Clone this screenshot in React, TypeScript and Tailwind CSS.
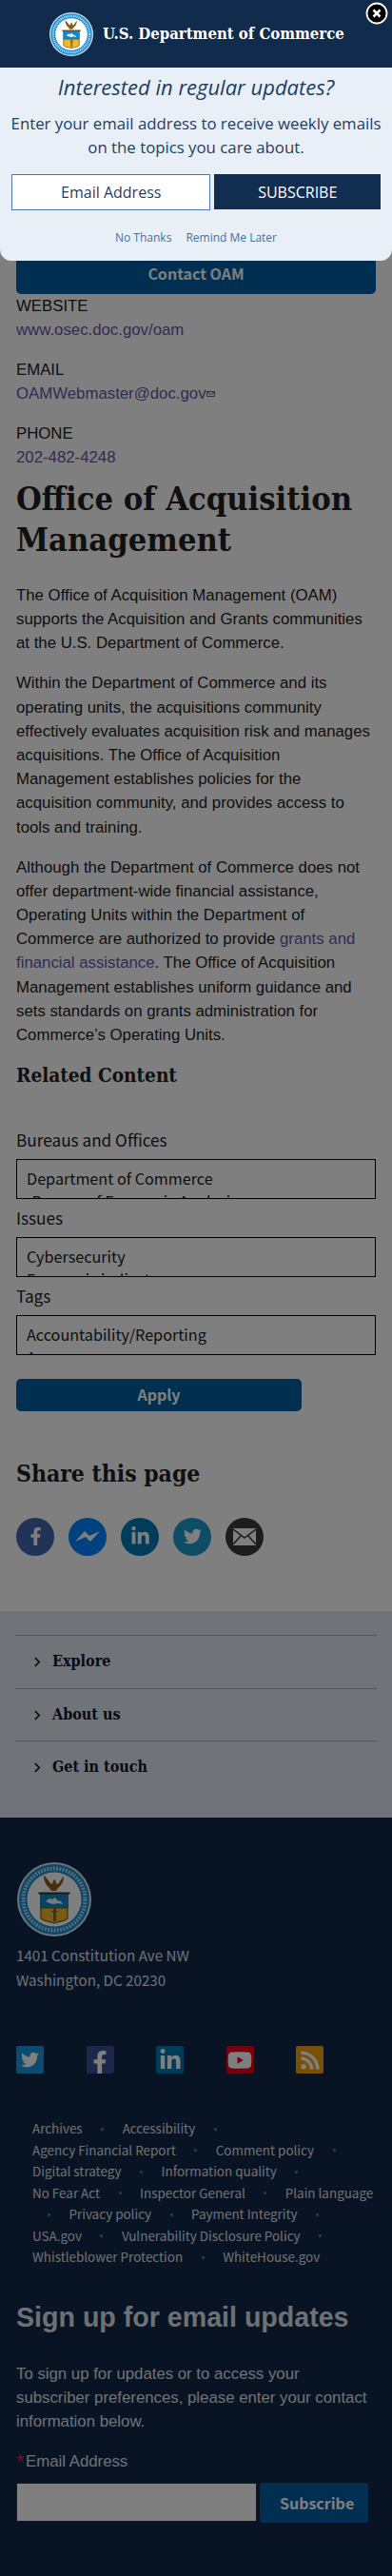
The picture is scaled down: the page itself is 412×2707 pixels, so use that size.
import React from "react";
import { FaFacebookF, FaLinkedinIn, FaTwitter, FaYoutube, FaRss } from "react-icons/fa";

const sans = "font-['Noto_Sans_CJK_SC',sans-serif]";
const serif = "font-['DejaVu_Serif_Condensed','DejaVu_Serif',serif] font-bold [font-stretch:condensed]";

function Seal({ className }: { className: string }) {
  return (
    <svg viewBox="0 0 78 78" className={className}>
      <circle cx="39" cy="39" r="39" fill="#d8e6f2" />
      <circle cx="39" cy="39" r="37" fill="#1b8fd0" />
      <circle cx="39" cy="39" r="32.5" fill="none" stroke="#b9dcf2" strokeWidth="4" strokeDasharray="1.8 1.5" />
      <circle cx="39" cy="39" r="28.5" fill="#fff" />
      <path d="M28 14c2 1 4 4 7 8l2 1 1-4 2-1 1 4 2 1c3-4 4-7 6-8 0 5-2 9-6 12l-2 3h-5l-2-3c-4-3-6-8-6-13z" fill="#8a5a1c" />
      <path d="M24 33h30v15H24z" fill="#1487c4" />
      <path d="M22.500 31.500h33v2h-33z" fill="#333" />
      <path d="M30 41l4-3 3 1 3-2 2 3 4 1 2 3-5-1-5 1-4-1z" fill="#f3f7fa" />
      <path d="M25 48h28v11c-2 3-9 3-14 5-5-2-12-2-14-5z" fill="#f2b829" stroke="#6d5520" strokeWidth="1.2" />
      <path d="M38 48h3v14h-3zM36 51h7v1h-7z" fill="#8a6720" />
    </svg>
  );
}

function Contact({ label, value, mail }: { label: string; value: string; mail?: boolean }) {
  return (
    <div className="mb-[17px] h-[50px] text-[16.800px] leading-[25px]">
      <div>{label}</div>
      <div className="flex items-center text-[#6455a8]">
        <span>{value}</span>
        {mail && (
          <svg viewBox="0 0 10 7" className="h-[6px] w-[9px]" fill="none" stroke="#444">
            <path d="M.5.5h9v6h-9zM.5 1L5 4l4.500-3" />
          </svg>
        )}
      </div>
    </div>
  );
}

function Field({ label, first, second, indent }: { label: string; first: string; second: string; indent?: boolean }) {
  return (
    <div className={`h-[82px] ${sans}`}>
      <div className="h-[29px] text-[17.200px] leading-[17px]">{label}</div>
      <div className="h-[42px] overflow-hidden border border-black pl-[10px] pt-[7px] text-[16.200px] leading-[24px] whitespace-nowrap">
        <div>{first}</div>
        <div className={indent ? "pl-[7px]" : ""}>{second}</div>
      </div>
    </div>
  );
}

const legal = [
  ["Archives", "•", "Accessibility", "•"],
  ["Agency Financial Report", "•", "Comment policy", "•"],
  ["Digital strategy", "•", "Information quality", "•"],
  ["No Fear Act", "•", "Inspector General", "•", "Plain language"],
  ["•", "Privacy policy", "•", "Payment Integrity", "•"],
  ["USA.gov", "•", "Vulnerability Disclosure Policy", "•"],
  ["Whistleblower Protection", "•", "WhiteHouse.gov"],
];

function Share({ bg, children }: { bg: string; children: React.ReactNode }) {
  return <span className={`flex size-10 items-center justify-center rounded-full text-white ${bg}`}>{children}</span>;
}

function Social({ bg, children }: { bg: string; children: React.ReactNode }) {
  return <span className={`flex size-[29px] items-center justify-center overflow-hidden rounded-[2px] text-white ${bg}`}>{children}</span>;
}

function Modal() {
  return (
    <div className="absolute inset-x-0 top-0 h-[274px] overflow-hidden rounded-b-[12px] bg-[#e8eff7] font-['Open_Sans','Noto_Sans',sans-serif] text-[#1d3f60]">
      <div className="flex h-[71px] items-center bg-[#112b4c] pl-[52px]">
        <Seal className="size-[46px]" />
        <span className={`ml-[10px] text-[16.600px] whitespace-nowrap text-white ${serif}`}>U.S. Department of Commerce</span>
      </div>
      <svg viewBox="0 0 24 24" className="absolute top-[2px] right-[4px] size-6">
        <circle cx="12" cy="12" r="10.500" fill="#000" stroke="#fff" strokeWidth="1.800" />
        <path d="M8.500 8.500l7 7m0-7l-7 7" stroke="#fff" strokeWidth="2.600" />
      </svg>
      <div className="mt-[6px] h-[28px] text-center text-[22px] leading-[28px] italic">Interested in regular updates?</div>
      <div className="mt-[12px] text-center text-[16.800px] leading-[25px] whitespace-nowrap">
        <div>Enter your email address to receive weekly emails</div>
        <div>on the topics you care about.</div>
      </div>
      <div className="mt-[16px] flex gap-1 px-[12px]">
        <div className="h-[38px] w-[210px] border border-[#4a7aac] bg-white text-center text-[16px] leading-[37px]">Email Address</div>
        <div className="h-[37px] w-[175px] bg-[#112e51] text-center text-[16px] leading-[38px] text-white">SUBSCRIBE</div>
      </div>
      <div className="mt-[20px] flex gap-[15px] pl-[121px] text-[12px] leading-[18px] text-[#3f72a6]">
        <span>No Thanks</span>
        <span>Remind Me Later</span>
      </div>
    </div>
  );
}

export default function App() {
  return (
    <div className="relative h-[2707px] w-[412px] overflow-hidden bg-white font-['Liberation_Sans',sans-serif] text-[#212121]">
      <main className="h-[1693px] px-[17px] pt-[266px]">
        <div className={`h-[43px] rounded-[5px] bg-[#005ea2] text-center text-[16px] leading-[43px] font-bold text-white ${sans}`}>Contact OAM</div>
        <Contact label="WEBSITE" value="www.osec.doc.gov/oam" />
        <Contact label="EMAIL" value="OAMWebmaster@doc.gov" mail />
        <Contact label="PHONE" value="202-482-4248" />
        <h1 className={`-mt-[7px] h-[86px] text-[34.200px] leading-[43px] whitespace-nowrap ${serif}`}>
          Office of Acquisition
          <br />
          Management
        </h1>
        <div className="pt-[24px] text-[16.800px] leading-[25.200px] whitespace-nowrap">
          <p>The Office of Acquisition Management (OAM)<br />supports the Acquisition and Grants communities<br />at the U.S. Department of Commerce.</p>
          <p className="mt-[16.800px]">Within the Department of Commerce and its<br />operating units, the acquisitions community<br />effectively evaluates acquisition risk and manages<br />acquisitions. The Office of Acquisition<br />Management establishes policies for the<br />acquisition community, and provides access to<br />tools and training.</p>
          <p className="mt-[16.800px]">Although the Department of Commerce does not<br />offer department-wide financial assistance,<br />Operating Units within the Department of<br />Commerce are authorized to provide <span className="text-[#6455a8]">grants and<br />financial assistance</span>. The Office of Acquisition<br />Management establishes uniform guidance and<br />sets standards on grants administration for<br />Commerce’s Operating Units.</p>
        </div>
        <h2 className={`mt-[13.400px] h-[32px] text-[20.600px] leading-[32px] whitespace-nowrap ${serif}`}>Related Content</h2>
        <div className="mt-[43px]">
          <Field label="Bureaus and Offices" first="Department of Commerce" second="-Bureau of Economic Analysis" />
          <Field label="Issues" first="Cybersecurity" second="Economic indicators" />
          <Field label="Tags" first="Accountability/Reporting" second="Agency" />
        </div>
        <div className={`mt-[14px] h-[34px] w-[300px] rounded-[5px] bg-[#005ea2] text-center text-[16px] leading-[33px] font-bold text-white ${sans}`}>Apply</div>
        <h2 className={`mt-[48px] h-[36px] text-[24.500px] leading-[36px] whitespace-nowrap ${serif}`}>Share this page</h2>
        <div className="mt-[28px] flex gap-[15px]">
          <Share bg="bg-[#4267b2]"><FaFacebookF size={19} /></Share>
          <Share bg="bg-[#0084ff]">
            <svg viewBox="0 0 26 13" className="h-[13px] w-[26px]"><path d="M0 12L10 1l5 5L26 1 16 12l-5-5z" fill="currentColor" /></svg>
          </Share>
          <Share bg="bg-[#007bb5]"><FaLinkedinIn size={21} /></Share>
          <Share bg="bg-[#1d9bcb]"><FaTwitter size={19} /></Share>
          <Share bg="bg-[#3a3a3a]">
            <svg viewBox="0 0 24 18" className="h-[18px] w-[24px]">
              <path d="M0 0h24v18H0z" fill="currentColor" />
              <path d="M0 1l12 9L24 1M0 17l8-9m16 9l-8-9" fill="none" stroke="#3a3a3a" strokeWidth="1.500" />
            </svg>
          </Share>
        </div>
      </main>
      <nav className="h-[217px] bg-[#e1e7f1] px-[16px] pt-[25px]">
        {["Explore", "About us", "Get in touch"].map((item) => (
          <div key={item} className="flex h-[55.600px] items-center border-t border-[#a3a9b5] pl-[20px]">
            <svg viewBox="0 0 8 12" className="mt-px h-[11px] w-[7px]" fill="none" stroke="#112" strokeWidth="1.800"><path d="M1 1l5 5-5 5" /></svg>
            <span className={`ml-[12px] text-[16px] text-[#0b1526] ${serif}`}>{item}</span>
          </div>
        ))}
      </nav>
      <footer className="h-[797px] bg-[#112849] px-[17px] pt-[47px] text-[#dfe1e5]">
        <Seal className="ml-px size-[78px]" />
        <div className={`mt-[7px] text-[15.200px] leading-[25.500px] ${sans}`}>1401 Constitution Ave NW<br />Washington, DC 20230</div>
        <div className="mt-[57px] flex gap-[44.500px]">
          <Social bg="bg-[#1b95e0]"><FaTwitter size={19} /></Social>
          <Social bg="bg-[#3b4f93]"><FaFacebookF size={24} className="mt-[5px]" /></Social>
          <Social bg="bg-[#0077b5]"><FaLinkedinIn size={24} /></Social>
          <Social bg="bg-[#e6001c]"><FaYoutube size={26} /></Social>
          <Social bg="bg-[#f0a30c]"><FaRss size={22} /></Social>
        </div>
        <div className={`mt-[46px] pl-[17px] text-[13.450px] leading-[22.500px] ${sans}`}>
          {legal.map((row, r) => (
            <div key={r} className={`flex items-center gap-[19.500px] whitespace-nowrap ${r === 4 ? "pl-[16px]" : ""}`}>
              {row.map((t, i) =>
                t === "•" ? <span key={i} className="mt-[2px] size-[3px] shrink-0 rounded-full bg-[#6c7a91]" /> : <span key={i}>{t}</span>
              )}
            </div>
          ))}
        </div>
        <h2 className="mt-[32px] h-[40px] text-[28.600px] leading-[40px] font-bold whitespace-nowrap">Sign up for email updates</h2>
        <div className="mt-[27px] text-[16.800px] leading-[25.200px] whitespace-nowrap">To sign up for updates or to access your<br />subscriber preferences, please enter your contact<br />information below.</div>
        <div className="mt-[17px] flex text-[16.800px] leading-[25px]"><span className="w-[10px] text-[22px] text-[#d0244a]">*</span><span>Email Address</span></div>
        <div className="mt-[10px] flex gap-[3px]">
          <div className="h-[41px] w-[253px] border border-[#333] bg-white" />
          <div className={`h-[42px] w-[114px] rounded-[3px] bg-[#005ea2] pl-[21px] text-[16px] leading-[42px] font-bold text-white ${sans}`}>Subscribe</div>
        </div>
      </footer>
      <div className="absolute inset-0 bg-black/50" />
      <Modal />
    </div>
  );
}
